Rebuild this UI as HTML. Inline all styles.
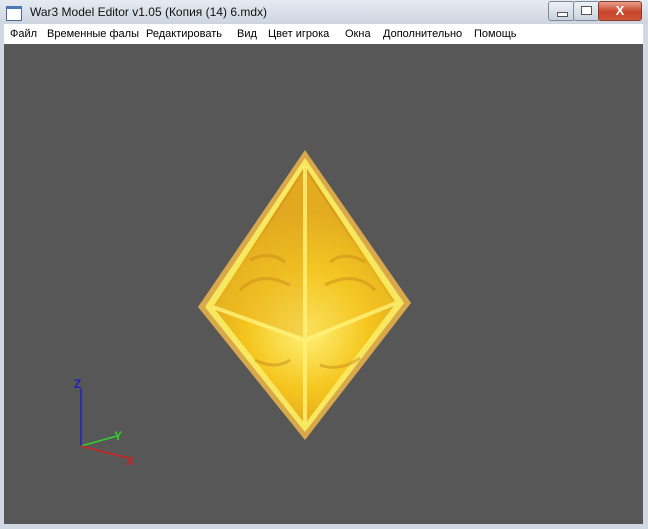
<!DOCTYPE html>
<html><head><meta charset="utf-8"><style>
body{margin:0;width:648px;height:529px;overflow:hidden;background:#cfd8e3;font-family:"Liberation Sans","DejaVu Sans",sans-serif;position:relative}
.title{position:absolute;left:0;top:0;width:648px;height:24px;background:linear-gradient(#e6ebf1,#d7dee7 60%,#cdd5df)}
.title .t{position:absolute;left:30px;top:5px;font-size:12px;color:#111}
.title .ic{position:absolute;left:6px;top:6px;width:14px;height:11px;border:1px solid #4a6a9a;background:#fff;border-top:3px solid #4a78b8}
.menu{position:absolute;left:4px;top:24px;width:639px;height:20px;background:#fff;font-size:11px;color:#000}
.menu span{position:absolute;top:4px}
.vp{position:absolute;left:4px;top:44px;width:639px;height:480px;background:#575757}
.btn{position:absolute;top:1px;height:18px;border:1px solid #7d8a9c;border-radius:3px;background:linear-gradient(#eef2f6,#c9d2dd)}
</style></head><body>
<div class="title"><div class="ic"></div><div class="t">War3 Model Editor v1.05 (Копия (14) 6.mdx)</div>
<div class="btn" style="left:548px;width:25px"><div style="position:absolute;left:8px;top:10px;width:9px;height:3px;border:1px solid #555;background:#fff"></div></div>
<div class="btn" style="left:573px;width:25px"><div style="position:absolute;left:7px;top:4px;width:9px;height:7px;border:1px solid #555;background:#fff"></div></div>
<div class="btn" style="left:598px;width:42px;background:linear-gradient(#e8a08c,#c8442a 55%,#d0563a);border-color:#8a3a2a;color:#fff;font-weight:bold;font-size:13px;text-align:center;line-height:17px">X</div>
</div>
<div class="menu">
<span style="left:6px">Файл</span><span style="left:43px">Временные фалы</span><span style="left:142px">Редактировать</span><span style="left:233px">Вид</span><span style="left:264px">Цвет игрока</span><span style="left:341px">Окна</span><span style="left:379px">Дополнительно</span><span style="left:470px">Помощь</span>
</div>
<div class="vp"></div>
<svg style="position:absolute;left:0;top:0" width="648" height="529">
<defs>
<radialGradient id="g" cx="307" cy="330" r="120" gradientUnits="userSpaceOnUse">
<stop offset="0" stop-color="#fff27a"/><stop offset="0.5" stop-color="#f5c61e"/><stop offset="1" stop-color="#d89a1a"/></radialGradient>
</defs>
<polygon points="305,150 411,303 305,440 198,307" fill="#d9a84a"/>
<polygon points="305,158 404,303 305,432 205,307" fill="#f7e860"/>
<polygon points="305,166 396,303 305,424 213,307" fill="url(#g)"/>
<polygon points="305,170 305,340 216,306" fill="#e9b526" opacity="0.5"/>
<polygon points="305,170 393,303 305,340" fill="#f2c52a" opacity="0.4"/>
<g stroke="#c98a1a" stroke-width="3" opacity="0.5" fill="none">
<path d="M240,290 Q260,270 290,285 M325,285 Q355,270 375,290 M250,260 Q270,250 285,262 M330,262 Q345,250 365,262 M255,360 Q275,370 290,360 M320,365 Q340,372 360,358"/>
</g>
<path d="M305,166 L305,424 M213,307 L305,340 L396,303" stroke="#fff27a" stroke-width="4" fill="none" opacity="0.8"/>
<line x1="81" y1="446" x2="81" y2="389" stroke="#2020c0" stroke-width="1.5"/>
<line x1="81" y1="446" x2="117" y2="436" stroke="#30d030" stroke-width="1.5"/>
<line x1="81" y1="446" x2="128" y2="458" stroke="#d02020" stroke-width="1.5"/>
<text x="74" y="388" font-size="12" font-weight="bold" fill="#2020c0" font-family="Liberation Sans">Z</text>
<text x="114" y="440" font-size="12" font-weight="bold" fill="#30d030" font-family="Liberation Sans">Y</text>
<text x="126" y="465" font-size="12" font-weight="bold" fill="#d02020" font-family="Liberation Sans">X</text>
</svg>
</body></html>
